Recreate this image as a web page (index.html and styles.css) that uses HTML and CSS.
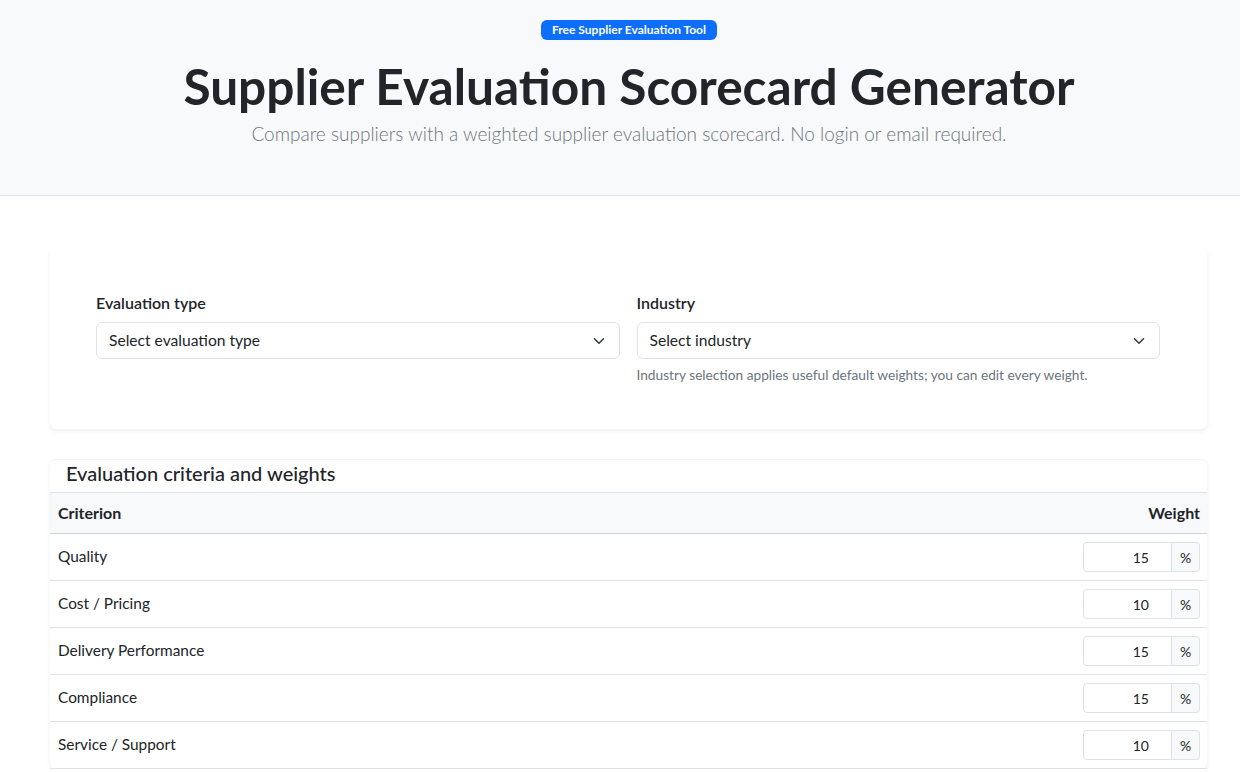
FILE: index.html
```html
<!DOCTYPE html>
<html lang="en">
  <head>
    <meta charset="utf-8">
    <title>Supplier Evaluation Scorecard Generator</title>
    <link rel="stylesheet" href="styles.css">
  </head>
  <body>
    <header class="hero">
      <span class="badge">Free Supplier Evaluation Tool</span>
      <h1 class="hero-title">Supplier Evaluation Scorecard Generator</h1>
      <p class="lead">Compare suppliers with a weighted supplier evaluation scorecard. No login or email required.</p>
    </header>
    <main class="page">
      <section class="card setup">
        <div class="field">
          <div class="form-label">Evaluation type</div>
          <div class="select">
            <span>Select evaluation type</span>
            <svg width="16" height="12" viewBox="0 0 16 16"><path d="m2 5 6 6 6-6" fill="none" stroke="#343a40" stroke-width="2" stroke-linecap="round" stroke-linejoin="round"/></svg>
          </div>
        </div>
        <div class="field">
          <div class="form-label">Industry</div>
          <div class="select">
            <span>Select industry</span>
            <svg width="16" height="12" viewBox="0 0 16 16"><path d="m2 5 6 6 6-6" fill="none" stroke="#343a40" stroke-width="2" stroke-linecap="round" stroke-linejoin="round"/></svg>
          </div>
          <div class="form-text">Industry selection applies useful default weights; you can edit every weight.</div>
        </div>
      </section>

      <section class="card criteria">
        <h2 class="card-title">Evaluation criteria and weights</h2>
        <table class="weights">
          <thead>
            <tr>
              <th class="name">Criterion</th>
              <th class="weight">Weight</th>
            </tr>
          </thead>
          <tbody>
            <tr>
              <td class="name">Quality</td>
              <td class="weight"><div class="input-group"><span class="num">15</span><span class="unit">%</span></div></td>
            </tr>
            <tr>
              <td class="name">Cost / Pricing</td>
              <td class="weight"><div class="input-group"><span class="num">10</span><span class="unit">%</span></div></td>
            </tr>
            <tr>
              <td class="name">Delivery Performance</td>
              <td class="weight"><div class="input-group"><span class="num">15</span><span class="unit">%</span></div></td>
            </tr>
            <tr>
              <td class="name">Compliance</td>
              <td class="weight"><div class="input-group"><span class="num">15</span><span class="unit">%</span></div></td>
            </tr>
            <tr>
              <td class="name">Service / Support</td>
              <td class="weight"><div class="input-group"><span class="num">10</span><span class="unit">%</span></div></td>
            </tr>
          </tbody>
        </table>
      </section>
    </main>
  </body>
</html>
```

FILE: styles.css
```css
* {
  box-sizing: border-box;
}

body {
  margin: 0;
  color: #212529;
  background: #FFFFFF;
  font-family: "Segoe UI", Lato, "Liberation Sans", sans-serif;
  font-size: 16px;
  line-height: 1.5;
}

.hero {
  display: flex;
  flex-direction: column;
  align-items: center;
  padding: 20px 0 47px 18px;
  text-align: center;
  background: #F8F9FA;
  border-bottom: 1px solid #DEE2E6;
}

.badge {
  display: block;
  padding: 3px 11px;
  font-size: 12px;
  font-weight: 700;
  line-height: 14px;
  color: #FFFFFF;
  background: #0D6EFD;
  border-radius: 6px;
}

.hero-title {
  margin: 17px 0 3px 0;
  font-size: 49.6px;
  font-weight: 700;
  line-height: 1.2;
}

.lead {
  margin: 0;
  font-size: 19px;
  font-weight: 300;
  color: #6C757D;
}

.page {
  width: 1157px;
  margin: 51px 0 0 50px;
}

.card {
  background: #FFFFFF;
  border-radius: 6px;
  box-shadow: 0 2px 4px rgba(0, 0, 0, 0.075);
}

.setup {
  display: flex;
  gap: 17px;
  padding: 44px 47px 44px 46px;
}

.field {
  flex: 1;
}

.form-label {
  margin-bottom: 7px;
  font-weight: 600;
  font-size: 16px;
}

.select {
  display: flex;
  align-items: center;
  justify-content: space-between;
  height: 37px;
  padding: 0 12px;
  font-size: 15.6px;
  border: 1px solid #DEE2E6;
  border-radius: 6px;
}

.form-text {
  margin-top: 6px;
  font-size: 13.7px;
  line-height: 19.5px;
  color: #6C757D;
}

.criteria {
  margin-top: 30px;
  border-top: 1px solid #F3F3F3;
}

.card-title {
  margin: 0;
  padding: 0 16px 6px 16px;
  font-size: 20px;
  font-weight: 500;
  line-height: 1.3;
}

.weights {
  width: 100%;
  border-collapse: collapse;
  border-spacing: 0;
  font-size: 15.4px;
}

.weights th,
.weights td {
  padding: 8px;
  border-bottom: 1px solid #DEE2E6;
  text-align: left;
}

.weights th {
  background: #F8F9FA;
  font-size: 16px;
  font-weight: 700;
  border-top: 1px solid #DEE2E6;
  border-bottom: 1px solid #CED4DA;
}

.weights .weight {
  text-align: right;
  padding-right: 7px;
}

.input-group {
  display: inline-flex;
  height: 30px;
  font-size: 14px;
  vertical-align: middle;
}

.input-group .num {
  width: 89px;
  padding: 4px 22px 0 8px;
  text-align: right;
  border: 1px solid #DEE2E6;
  border-radius: 4px 0 0 4px;
}

.input-group .unit {
  width: 28px;
  padding-top: 4px;
  text-align: center;
  background: #F8F9FA;
  border: 1px solid #DEE2E6;
  border-left: none;
  border-radius: 0 4px 4px 0;
}
```
